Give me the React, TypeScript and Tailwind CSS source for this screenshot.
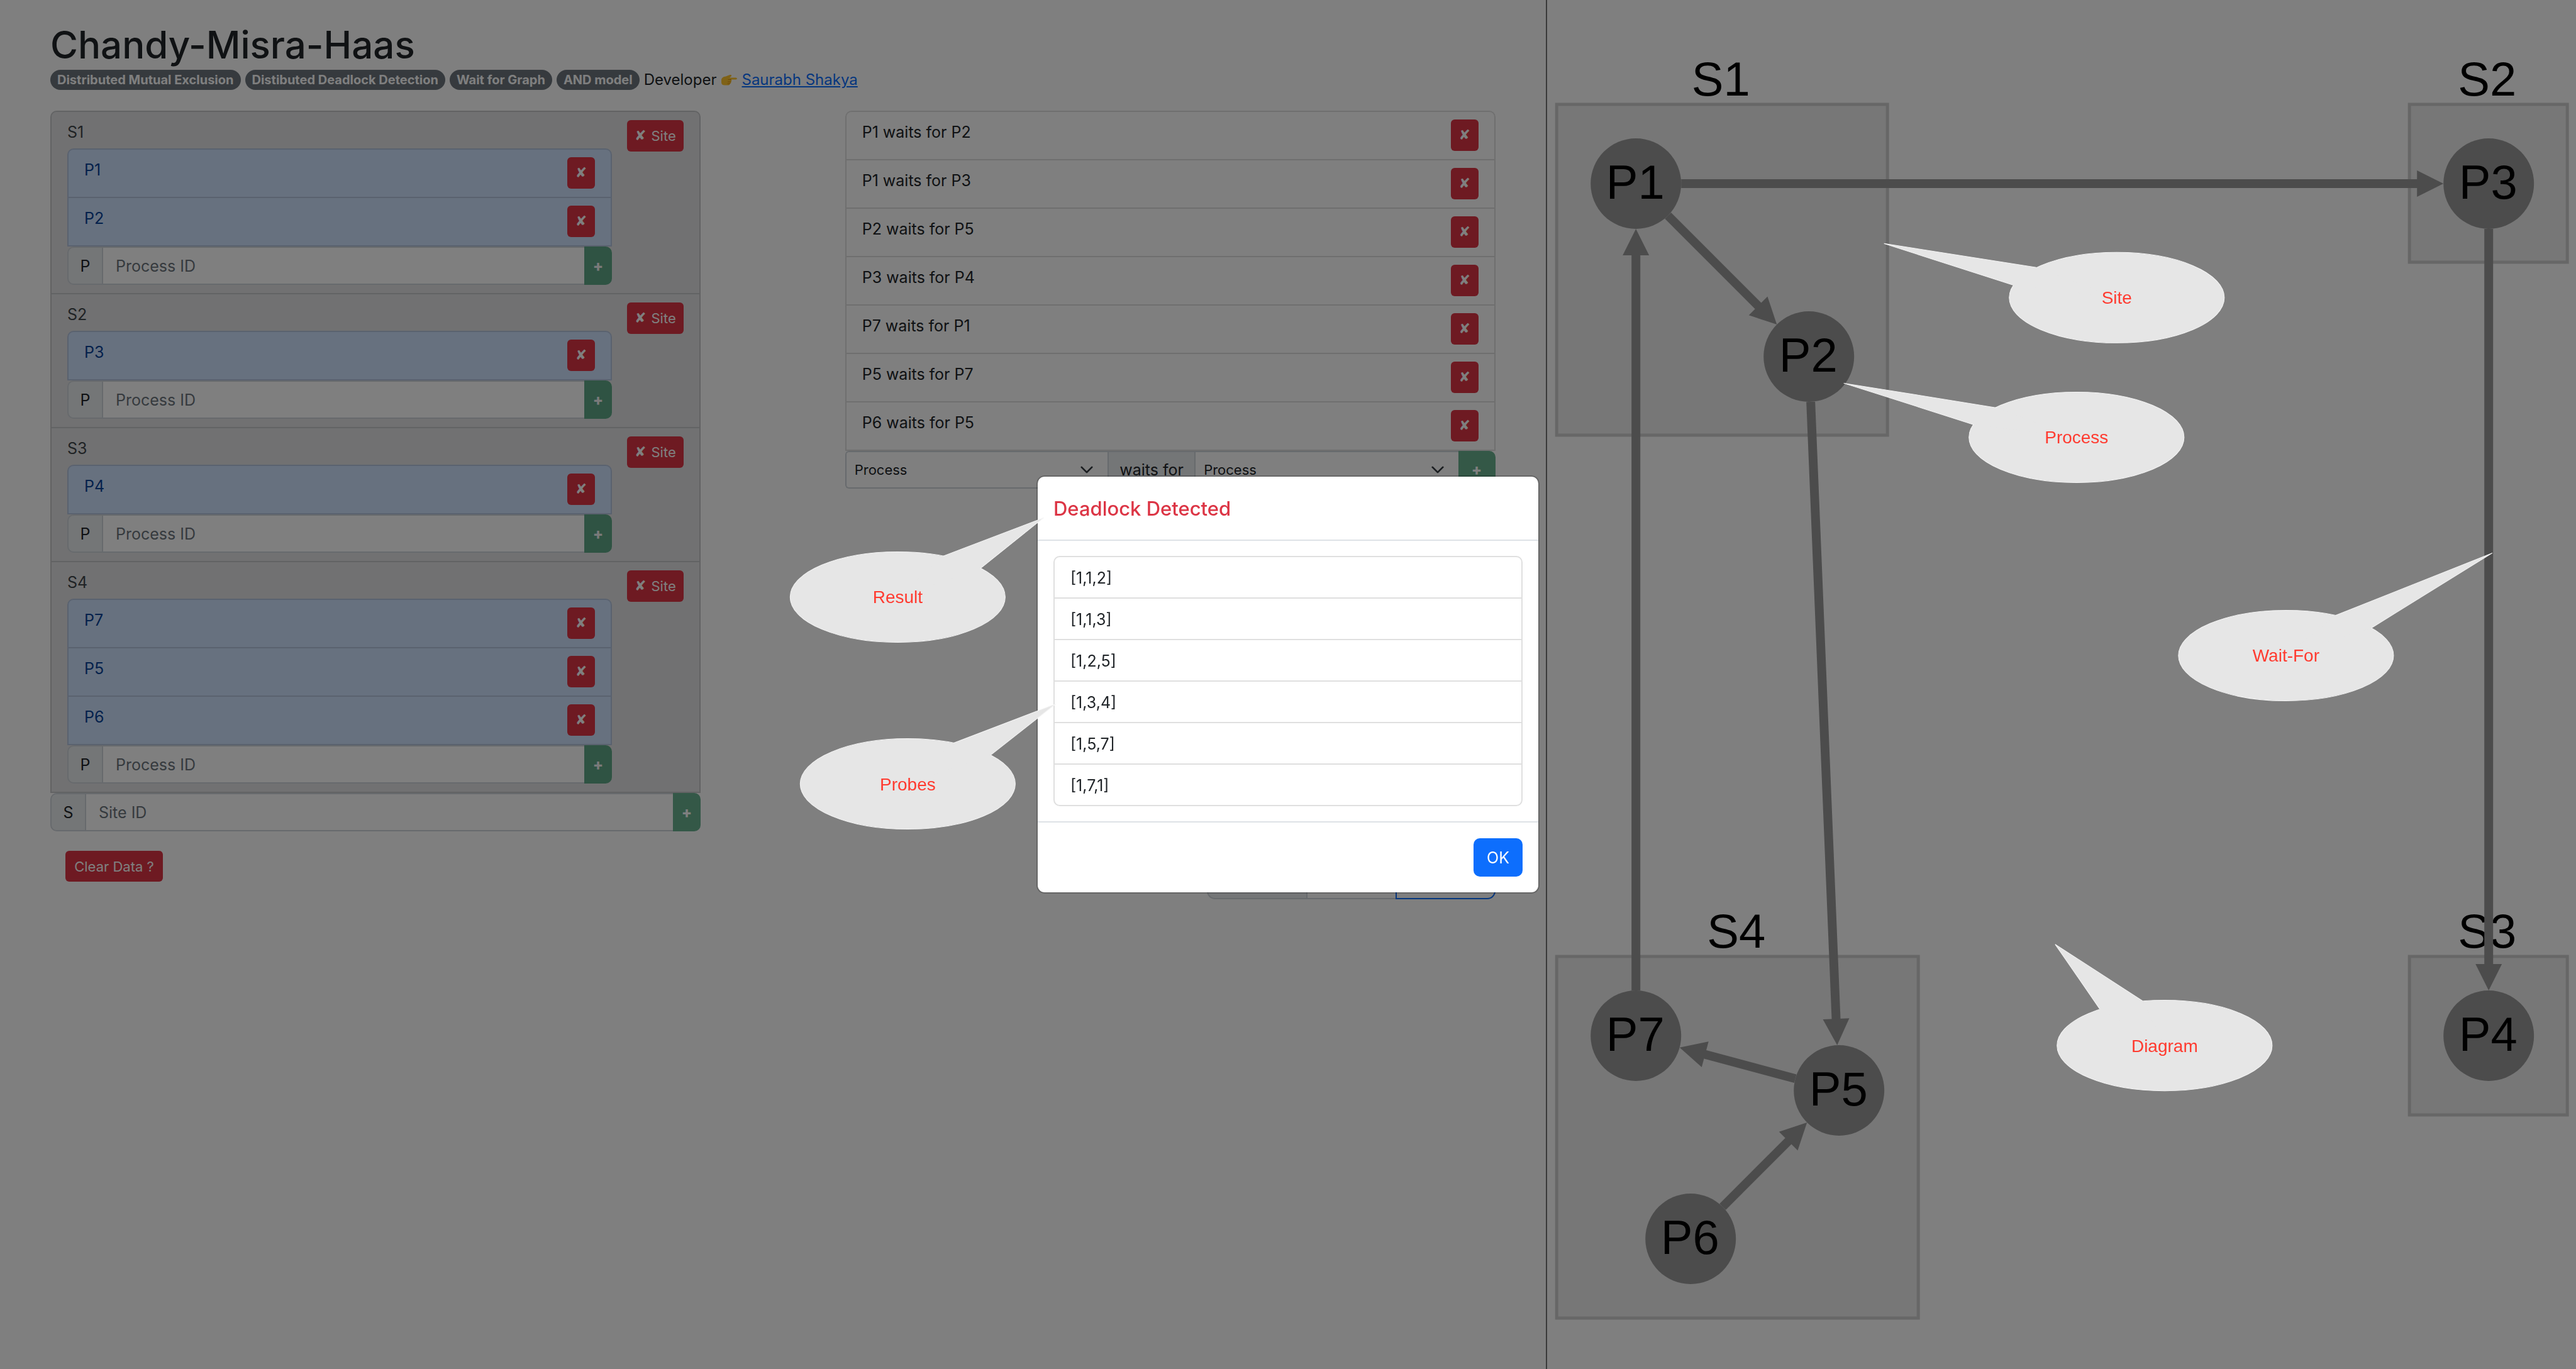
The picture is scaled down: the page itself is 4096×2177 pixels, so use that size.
import React from "react";

type Site = { id: string; processes: string[] };
type Point = { x: number; y: number };

const SITES: Site[] = [
  { id: "S1", processes: ["P1", "P2"] },
  { id: "S2", processes: ["P3"] },
  { id: "S3", processes: ["P4"] },
  { id: "S4", processes: ["P7", "P5", "P6"] },
];

const WAITS: [string, string][] = [
  ["P1", "P2"],
  ["P1", "P3"],
  ["P2", "P5"],
  ["P3", "P4"],
  ["P7", "P1"],
  ["P5", "P7"],
  ["P6", "P5"],
];

const TAGS = ["Distributed Mutual Exclusion", "Distibuted Deadlock Detection", "Wait for Graph", "AND model"];

const PROBES = ["[1,1,2]", "[1,1,3]", "[1,2,5]", "[1,3,4]", "[1,5,7]", "[1,7,1]"];

function Cross() {
  return <span className="font-['DejaVu_Sans']">✘</span>;
}

function RemoveButton({ label }: { label: string }) {
  return (
    <button
      type="button"
      aria-label={label}
      className="flex h-[50px] w-11 shrink-0 items-center justify-center rounded-md bg-[#dc3545] text-[22px] text-white"
    >
      <Cross />
    </button>
  );
}

function AddButton({ label, wide }: { label: string; wide?: boolean }) {
  return (
    <button
      type="button"
      disabled
      aria-label={label}
      className={
        (wide ? "w-[59px]" : "w-11") +
        " shrink-0 rounded-r-[10px] bg-[#198754] text-[24px] font-extrabold text-white opacity-65"
      }
    >
      +
    </button>
  );
}

function IdInput({ id, prefix, placeholder }: { id: string; prefix: string; placeholder: string }) {
  return (
    <div className="flex h-[61px]">
      <label
        htmlFor={id}
        className="flex w-[57px] shrink-0 items-center justify-center rounded-l-[10px] border-2 border-[#ced4da] bg-[#e9ecef]"
      >
        {prefix}
      </label>
      <input
        id={id}
        type="text"
        placeholder={placeholder}
        className="min-w-0 flex-1 border-y-2 border-[#ced4da] bg-white px-5 placeholder:text-[#6c757d]"
      />
      <AddButton label={"Add " + placeholder} />
    </div>
  );
}

function SiteCard({ site }: { site: Site }) {
  return (
    <li className="flex items-start gap-6 border-b-2 border-black/[.125] px-[25px] py-[13px] text-[#41464b]">
      <div className="min-w-0 flex-1">
        <div className="h-[45px]">{site.id}</div>
        <ul className="rounded-t-[10px] border-x-2 border-t-2 border-black/[.125] bg-[#cfe2ff] leading-10 text-[#084298]">
          {site.processes.map((p) => (
            <li
              key={p}
              className="flex items-start justify-between border-b-2 border-black/[.125] px-[25px] pt-3 pb-[13px]"
            >
              {p}
              <RemoveButton label={"Remove " + p} />
            </li>
          ))}
        </ul>
        <div className="text-[#212529]">
          <IdInput id={"process-" + site.id} prefix="P" placeholder="Process ID" />
        </div>
      </div>
      <button
        type="button"
        className="flex h-[50px] w-[90px] shrink-0 items-center justify-center gap-2 rounded-md bg-[#dc3545] text-[22px] text-white"
      >
        <Cross />
        Site
      </button>
    </li>
  );
}

function ProcessSelect({ label, first }: { label: string; first?: boolean }) {
  return (
    <div className="relative flex min-w-0 flex-1">
      <select
        aria-label={label}
        className={
          (first ? "rounded-l-[6px] border-l-2" : "border-l-0") +
          " w-full appearance-none border-y-2 border-[#ced4da] bg-white px-[13px] text-[22px]"
        }
      >
        <option>Process</option>
      </select>
      <svg
        viewBox="0 0 16 16"
        className="pointer-events-none absolute top-1/2 right-[22px] h-[22px] w-[22px] -translate-y-1/2"
        fill="none"
        stroke="#343a40"
        strokeWidth="2"
        strokeLinecap="round"
        strokeLinejoin="round"
      >
        <path d="m2 5 6 6 6-6" />
      </svg>
    </div>
  );
}

function PointingHand() {
  return (
    <svg viewBox="0 0 52 34" className="h-[17px] w-[26px]" aria-label="pointing right" role="img">
      <path
        d="M2 17C2 9 9 6 16 5L29 0C34 -1 36 3 33 5L28 9H48C53 9 53 15 48 15H32C36 17 35 21 32 22C34 25 32 28 29 28C29 32 26 33 23 33H13C6 33 2 30 2 24Z"
        fill="#ffc42e"
      />
      <path d="M33 15H24M32 22H23M29 28H22" stroke="#d98c12" strokeWidth="2" strokeLinecap="round" />
    </svg>
  );
}

const NODE_RADIUS = 72;
const HEAD = 42;

const NODES: Record<string, Point> = {
  P1: { x: 2600, y: 292 },
  P2: { x: 2875, y: 567 },
  P3: { x: 3956, y: 292 },
  P4: { x: 3956, y: 1647 },
  P5: { x: 2923, y: 1734 },
  P6: { x: 2687, y: 1970 },
  P7: { x: 2600, y: 1647 },
};

const REGIONS = [
  { id: "S1", x: 2474, y: 166, w: 526, h: 526 },
  { id: "S2", x: 3830, y: 166, w: 251, h: 251 },
  { id: "S3", x: 3830, y: 1521, w: 251, h: 252 },
  { id: "S4", x: 2474, y: 1521, w: 575, h: 575 },
];

function Edge({ from, to }: { from: Point; to: Point }) {
  const length = Math.hypot(to.x - from.x, to.y - from.y);
  const angle = (Math.atan2(to.y - from.y, to.x - from.x) * 180) / Math.PI;
  const tip = length - NODE_RADIUS;
  return (
    <g transform={`translate(${from.x} ${from.y}) rotate(${angle})`} fill="#999999">
      <path d={`M${NODE_RADIUS} -7H${tip - HEAD + 1}V7H${NODE_RADIUS}Z`} />
      <path d={`M${tip} 0L${tip - HEAD} ${-HEAD / 2}V${HEAD / 2}Z`} />
    </g>
  );
}

function WaitForGraph() {
  return (
    <svg
      viewBox="2459 0 1636 2177"
      className="block h-screen min-w-0 flex-1 border-l-2 border-[#757575] font-['Liberation_Sans',sans-serif]"
      role="img"
      aria-label="Wait-for graph"
    >
      {REGIONS.map((r) => (
        <g key={r.id}>
          <rect x={r.x} y={r.y} width={r.w} height={r.h} fill="#eeeeee" stroke="#cfcfcf" strokeWidth="5" />
          <text x={r.x + r.w / 2 - 2} y={r.y - 14} fontSize="76" textAnchor="middle">
            {r.id}
          </text>
        </g>
      ))}
      {WAITS.map(([a, b]) => (
        <Edge key={a + b} from={NODES[a]} to={NODES[b]} />
      ))}
      {Object.entries(NODES).map(([id, p]) => (
        <g key={id}>
          <circle cx={p.x} cy={p.y} r={NODE_RADIUS} fill="#999999" />
          <text x={p.x - 1} y={p.y + 24} fontSize="76" textAnchor="middle">
            {id}
          </text>
        </g>
      ))}
    </svg>
  );
}

const CALLOUTS: { text: string; x: number; y: number; tail: string }[] = [
  { text: "Site", x: 3365, y: 473, tail: "3200,453 2995,387 3237,425" },
  { text: "Process", x: 3301, y: 695, tail: "3138,675 2931,609 3174,648" },
  { text: "Wait-For", x: 3634, y: 1042, tail: "3713,978 3962,879 3770,998" },
  { text: "Diagram", x: 3441, y: 1662, tail: "3338,1604 3267,1501 3406,1591" },
  { text: "Result", x: 1427, y: 949, tail: "1499,884 1659,823 1558,904" },
  { text: "Probes", x: 1443, y: 1246, tail: "1516,1181 1678,1119 1575,1200" },
];

function Callouts() {
  return (
    <svg
      viewBox="0 0 4095 2176"
      className="pointer-events-none absolute inset-0 h-full w-full font-['Liberation_Sans',sans-serif]"
    >
      {CALLOUTS.map((c) => (
        <g key={c.text} fill="#e6e6e6">
          <ellipse cx={c.x} cy={c.y} rx="171" ry="72" stroke="#f4f4f4" />
          <polygon points={`${c.tail} ${c.x},${c.y}`} />
          <polyline points={c.tail} fill="none" stroke="#f4f4f4" />
          <text x={c.x} y={c.y + 10} fontSize="28" textAnchor="middle" fill="#ff3b30">
            {c.text}
          </text>
        </g>
      ))}
    </svg>
  );
}

function ResultDialog() {
  return (
    <div
      role="dialog"
      aria-modal="true"
      aria-labelledby="result-title"
      className="w-[800px] rounded-[13px] border-2 border-black/20 bg-white bg-clip-padding"
    >
      <header className="border-b-2 border-[#dee2e6] px-[25px] pt-[30px] pb-7">
        <h2 id="result-title" className="text-[31px] leading-[42px] font-medium text-[#dc3545]">
          Deadlock Detected
        </h2>
      </header>
      <div className="px-[25px] py-6">
        <ul className="divide-y-2 divide-black/[.125] rounded-[10px] border-2 border-black/[.125]">
          {PROBES.map((p) => (
            <li key={p} className="px-[25px] pt-3.5 pb-3">
              {p}
            </li>
          ))}
        </ul>
      </div>
      <footer className="flex justify-end border-t-2 border-[#dee2e6] p-[25px]">
        <button type="button" className="h-[61px] w-[78px] rounded-[10px] bg-[#0d6efd] text-white">
          OK
        </button>
      </footer>
    </div>
  );
}

export default function App() {
  return (
    <div className="flex min-h-screen bg-white font-['Inter',sans-serif] text-[25px] leading-[38px] text-[#212529]">
      <main className="w-3/5 shrink-0 px-20 pt-[34px]">
        <h1 className="text-[60px] leading-[74px] font-medium">Chandy-Misra-Haas</h1>
        <div className="mb-[30px] flex items-center gap-[7px] text-[24px]">
          {TAGS.map((t) => (
            <span
              key={t}
              className="h-8 rounded-full bg-[#6c757d] px-[11px] text-[20px] leading-8 font-bold text-white"
            >
              {t}
            </span>
          ))}
          <span>Developer</span>
          <PointingHand />
          <a href="#developer" className="text-[#0d6efd] underline">
            Saurabh Shakya
          </a>
        </div>

        <div className="flex items-start justify-between">
          <section className="w-[45%]">
            <ul className="rounded-t-[10px] border-x-2 border-t-2 border-black/[.125] bg-[#e2e3e5]">
              {SITES.map((s) => (
                <SiteCard key={s.id} site={s} />
              ))}
            </ul>
            <IdInput id="site" prefix="S" placeholder="Site ID" />
          </section>

          <section className="w-[45%]">
            <ul className="rounded-t-[10px] border-x-2 border-t-2 border-black/[.125] leading-10">
              {WAITS.map(([a, b]) => (
                <li
                  key={a + b}
                  className="flex items-start justify-between border-b-2 border-black/[.125] px-[25px] pt-3 pb-[13px]"
                >
                  {a} waits for {b}
                  <RemoveButton label={"Remove " + a + " waits for " + b} />
                </li>
              ))}
            </ul>
            <div className="flex h-[60px]">
              <ProcessSelect label="Waiting process" first />
              <span className="flex w-[140px] shrink-0 items-center justify-center border-2 border-[#ced4da] bg-[#e9ecef]">
                waits for
              </span>
              <ProcessSelect label="Awaited process" />
              <AddButton label="Add wait" wide />
            </div>
          </section>
        </div>

        <div className="flex items-start justify-between pl-6">
          <button
            type="button"
            className="mt-[31px] h-[49px] w-[155px] rounded-md bg-[#dc3545] text-[22px] text-white"
          >
            Clear Data ?
          </button>
          <div className="mt-[47px] flex h-[61px] w-[459px]">
            <span className="w-[158px] rounded-l-[13px] border-2 border-r-0 border-[#ced4da] bg-[#e9ecef]" />
            <select
              aria-label="Initiator"
              className="w-[142px] appearance-none border-2 border-r-0 border-[#ced4da] bg-white"
            />
            <button type="button" aria-label="Detect" className="flex-1 rounded-r-[13px] border-2 border-[#0d6efd]" />
          </div>
        </div>
      </main>

      <WaitForGraph />

      <div className="fixed inset-0 flex items-center justify-center bg-black/50">
        <ResultDialog />
        <Callouts />
      </div>
    </div>
  );
}
